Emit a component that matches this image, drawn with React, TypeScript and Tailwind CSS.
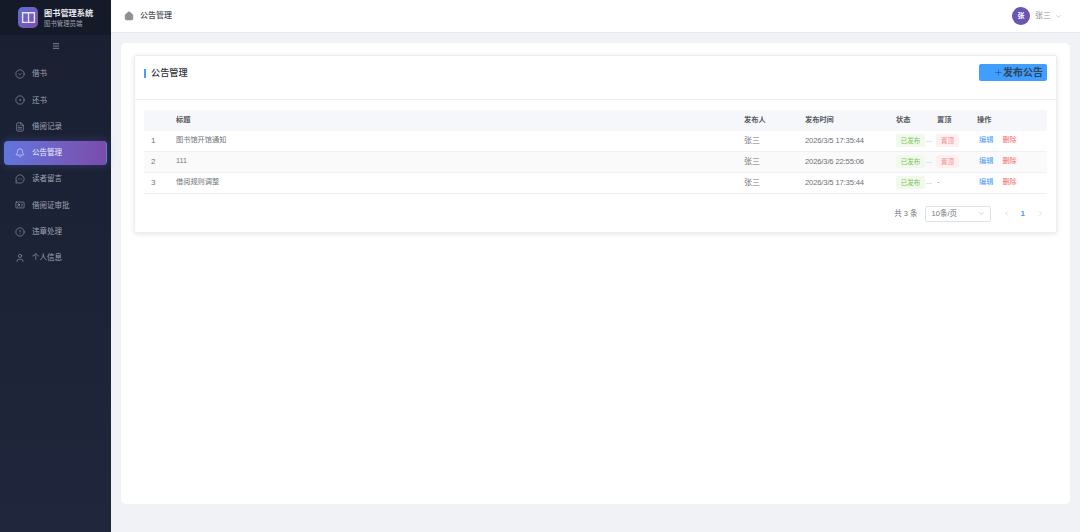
import { Bell, ChevronDown, ChevronLeft, ChevronRight, CircleAlert, CircleCheck, CircleDot, FileText, House, IdCard, Menu, MessageCircleMore, Plus, User } from 'lucide-react';

const menuItems = [
  { label: '借书', icon: CircleCheck },
  { label: '还书', icon: CircleDot },
  { label: '借阅记录', icon: FileText },
  { label: '公告管理', icon: Bell, active: true },
  { label: '读者留言', icon: MessageCircleMore },
  { label: '借阅证审批', icon: IdCard },
  { label: '违章处理', icon: CircleAlert },
  { label: '个人信息', icon: User },
];

const notices = [
  { id: 1, title: '图书馆开馆通知', author: '张三', time: '2026/3/5 17:35:44', pinned: true },
  { id: 2, title: '111', author: '张三', time: '2026/3/6 22:55:06', pinned: true, striped: true },
  { id: 3, title: '借阅规则调整', author: '张三', time: '2026/3/5 17:35:44', pinned: false },
];

function Sidebar() {
  return (
    <aside className="flex w-[111px] shrink-0 flex-col bg-gradient-to-b from-[#1a2032] to-[#20263b]">
      <div className="flex h-[35px] items-center gap-[6px] bg-[#151a29] pl-[18px]">
        <div className="flex h-[21px] w-[20px] items-center justify-center rounded-[5px] bg-gradient-to-br from-[#5b6fd8] to-[#7c4dab]">
          <svg viewBox="0 0 14 14" className="h-[15px] w-[15px]" fill="none" stroke="#e4e6f8" strokeWidth="1.3">
            <path d="M1.5 2.5h11v9h-11z" />
            <path d="M7 2.5v9" />
          </svg>
        </div>
        <div>
          <div className="text-[8.2px] leading-[11px] font-bold text-[#e6e8ee]">图书管理系统</div>
          <div className="text-[6.4px] leading-[9px] text-[#9aa0b0]">图书管理员端</div>
        </div>
      </div>
      <div className="flex h-[21px] items-center justify-center">
        <Menu className="h-[8px] w-[8px] text-[#aab0bf]" strokeWidth={2} />
      </div>
      <nav className="flex flex-col gap-[2.3px] px-[4px] pt-[6px]">
        {menuItems.map((item) => {
          const Icon = item.icon;
          return (
            <div
              key={item.label}
              className={
                item.active
                  ? 'flex h-[24px] items-center rounded-[4px] border-r border-[#4f86e0] bg-gradient-to-r from-[#5f76de] to-[#7a4bab] pl-[11px] text-[#eef0f8] shadow-[0_0_8px_rgba(90,110,220,0.35)]'
                  : 'flex h-[24px] items-center pl-[11px] text-[#9ea4b4]'
              }
            >
              <Icon className="h-[10px] w-[10px]" strokeWidth={1.4} />
              <span className="ml-[7px] text-[7.5px] leading-none">{item.label}</span>
            </div>
          );
        })}
      </nav>
    </aside>
  );
}

function TopBar() {
  return (
    <header className="flex h-[33px] shrink-0 items-center justify-between border-b border-[#e6e8ec] bg-white pr-[18px] pl-[13px]">
      <div className="flex items-center gap-[6px]">
        <House className="h-[10px] w-[10px] fill-[#8a8f98] text-[#8a8f98]" />
        <span className="text-[8px] font-medium text-[#4a4f57]">公告管理</span>
      </div>
      <div className="flex items-center">
        <div className="flex h-[18px] w-[18px] items-center justify-center rounded-full bg-[#6a55b5] text-[7px] font-bold text-white">张</div>
        <span className="ml-[5px] text-[8px] text-[#8a8f98]">张三</span>
        <ChevronDown className="ml-[4px] h-[7px] w-[7px] text-[#a8acb3]" />
      </div>
    </header>
  );
}

function NoticeTable() {
  return (
    <table className="w-full table-fixed border-collapse text-[7.2px] text-[#72767d]">
      <colgroup>
        <col className="w-[24px]" />
        <col />
        <col className="w-[61px]" />
        <col className="w-[91px]" />
        <col className="w-[41px]" />
        <col className="w-[40px]" />
        <col className="w-[78px]" />
      </colgroup>
      <thead>
        <tr className="h-[21px] bg-[#f5f7fa] text-left text-[#55595f]">
          <th />
          <th className="pl-[8px] font-bold">标题</th>
          <th className="pl-[8px] font-bold">发布人</th>
          <th className="pl-[8px] font-bold">发布时间</th>
          <th className="pl-[8px] font-bold">状态</th>
          <th className="pl-[8px] font-bold">置顶</th>
          <th className="pl-[8px] font-bold">操作</th>
        </tr>
      </thead>
      <tbody>
        {notices.map((row) => (
          <tr
            key={row.id}
            className={
              row.id === 1
                ? 'h-[20px] border-b border-[#eef0f3]'
                : row.striped
                  ? 'h-[21px] border-b border-[#eef0f3] bg-[#fafafa]'
                  : 'h-[21px] border-b border-[#eef0f3]'
            }
          >
            <td className="pl-[7px] text-[8px]">{row.id}</td>
            <td className="pl-[8px]">{row.title}</td>
            <td className="pl-[8px] text-[8px]">{row.author}</td>
            <td className="pl-[8px] text-[7.6px] tracking-[-0.14px] text-[#6e7176]">{row.time}</td>
            <td className="pl-[8px]">
              <div className="flex items-center">
                <span className="flex h-[13px] w-[29px] shrink-0 items-center justify-center rounded-[2px] bg-[#f0f9eb] text-[6.5px] text-[#7cc45a]">已发布</span>
                <span className="ml-[1px] text-[#a0a4aa]">...</span>
              </div>
            </td>
            <td className="pl-[7px]">
              {row.pinned ? (
                <span className="flex h-[13px] w-[23px] items-center justify-center rounded-[2px] bg-[#fef0f0] text-[6.5px] text-[#f08a8a]">置顶</span>
              ) : (
                <span className="pl-[1px]">-</span>
              )}
            </td>
            <td className="pl-[10px]">
              <span className="text-[#4a9cf5]">编辑</span>
              <span className="ml-[9px] text-[#f06a6a]">删除</span>
            </td>
          </tr>
        ))}
      </tbody>
    </table>
  );
}

function Pagination() {
  return (
    <div className="mt-[12px] flex items-center justify-end pr-[3px] text-[7.5px] text-[#72767d]">
      <span>共 3 条</span>
      <div className="ml-[7px] flex h-[16px] w-[66px] items-center justify-between rounded-[2px] border border-[#dfe2e7] bg-white pr-[5px] pl-[6px]">
        10条/页
        <ChevronDown className="h-[7px] w-[7px] text-[#b0b4ba]" />
      </div>
      <ChevronLeft className="ml-[12px] h-[7px] w-[7px] text-[#c0c4ca]" />
      <span className="ml-[11px] text-[8px] font-bold text-[#4a9cf5]">1</span>
      <ChevronRight className="ml-[12px] h-[7px] w-[7px] text-[#c0c4ca]" />
    </div>
  );
}

export default function App() {
  return (
    <div className="flex h-[532px] w-[1080px] overflow-hidden bg-[#f0f2f5] font-['Liberation_Sans','Noto_Sans_CJK_SC',sans-serif]">
      <Sidebar />
      <div className="flex min-w-0 flex-1 flex-col">
        <TopBar />
        <main className="flex-1 px-[10px] pt-[10px] pb-[28px]">
          <div className="h-[461px] rounded-[5px] bg-white px-[13px] pt-[12px]">
            <section className="h-[178px] rounded-[2px] border border-[#eceef1] bg-white shadow-[0_1px_5px_rgba(0,0,0,0.1)]">
              <div className="flex h-[44px] items-start justify-between border-b border-[#eceef1] pt-[8px] pr-[9px] pl-[9px]">
                <div className="flex h-[19px] items-center">
                  <span className="h-[9px] w-[2px] bg-[#409eff]" />
                  <h1 className="mt-[1px] ml-[5px] text-[9.2px] font-medium text-[#2f3338]">公告管理</h1>
                </div>
                <button className="flex h-[17px] w-[68px] items-center justify-end rounded-[2px] bg-[#409eff] pr-[4px] text-[10px] font-bold text-[#2f4560]">
                  <Plus className="h-[9px] w-[9px]" strokeWidth={1.5} />
                  发布公告
                </button>
              </div>
              <div className="px-[9px] pt-[10px]">
                <NoticeTable />
                <Pagination />
              </div>
            </section>
          </div>
        </main>
      </div>
    </div>
  );
}
